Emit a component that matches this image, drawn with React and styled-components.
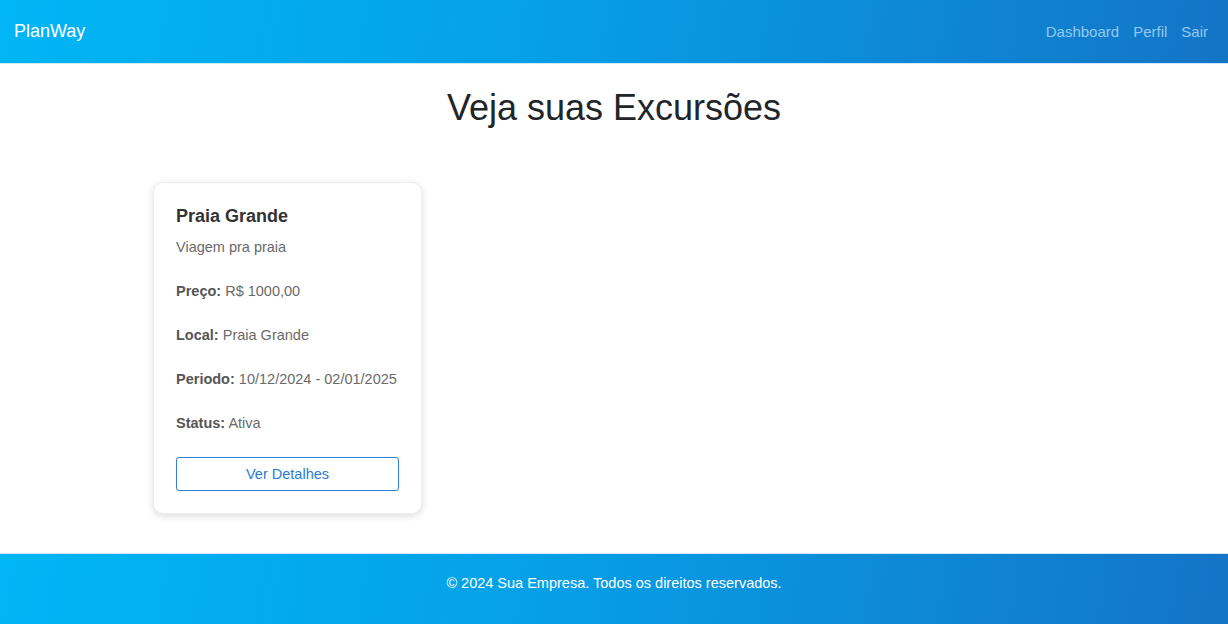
import styled, { createGlobalStyle } from "styled-components"

const GlobalStyle = createGlobalStyle`
  html, body { margin: 0; padding: 0; }
  body {
    font-family: "Liberation Sans", Arial, sans-serif;
    background: #fff;
  }
`

const excursoes = [
  {
    id: 1,
    nome: "Praia Grande",
    descricao: "Viagem pra praia",
    preco: "R$ 1000,00",
    local: "Praia Grande",
    periodo: "10/12/2024 - 02/01/2025",
    status: "Ativa",
  },
]

const Page = styled.div`
  min-height: 100vh;
  display: flex;
  flex-direction: column;
`

const TopBar = styled.header`
  height: 63px;
  display: flex;
  align-items: center;
  justify-content: space-between;
  padding: 0 20px 0 14px;
  background: linear-gradient(100deg, #01b6f6 0%, #069fe6 45%, #1474c6 100%);
  border-bottom: 1px solid #cfe9f8;
`

const Brand = styled.div`
  color: #fff;
  font-size: 18px;
`

const Nav = styled.nav`
  display: flex;
  gap: 14px;
`

const NavLink = styled.a`
  color: #93c9ef;
  font-size: 15px;
  text-decoration: none;
`

const Main = styled.main`
  flex: 1;
`

const Title = styled.h1`
  margin: 23px 0 53px;
  text-align: center;
  font-weight: 400;
  font-size: 36px;
  color: #212529;
`

const Grid = styled.div`
  max-width: 922px;
  margin: 0 auto 39px;
  display: grid;
  grid-template-columns: repeat(auto-fill, 269px);
  gap: 20px;
`

const Card = styled.div`
  border-radius: 10px;
  padding: 22px;
  background: #fff;
  box-shadow: 0 2px 7px rgba(0, 0, 0, 0.14);
  border: 1px solid #eee;
`

const CardTitle = styled.h3`
  margin: 0 0 10px;
  font-size: 18px;
  color: #333;
  line-height: 22px;
`

const Info = styled.p`
  margin: 0 0 24px;
  font-size: 14.5px;
  line-height: 20px;
  color: #6a6a6a;

  strong { color: #555; }
`

const Button = styled.button`
  width: 100%;
  height: 34px;
  border: 1px solid #2f80d8;
  border-radius: 3px;
  background: #fff;
  color: #2a7bd4;
  font-family: inherit;
  font-size: 14.5px;
`

const Footer = styled.footer`
  height: 72px;
  display: flex;
  align-items: center;
  justify-content: center;
  color: #fff;
  font-size: 14.5px;
  background: linear-gradient(100deg, #01b6f6 0%, #069fe6 45%, #1474c6 100%);
  border-top: 1px solid #cfe9f8;
  padding-bottom: 14px;
  box-sizing: border-box;
`

export default function App() {
  return (
    <Page>
      <GlobalStyle />
      <TopBar>
        <Brand>PlanWay</Brand>
        <Nav>
          <NavLink href="#">Dashboard</NavLink>
          <NavLink href="#">Perfil</NavLink>
          <NavLink href="#">Sair</NavLink>
        </Nav>
      </TopBar>
      <Main>
        <Title>Veja suas Excursões</Title>
        <Grid>
          {excursoes.map((e) => (
            <Card key={e.id}>
              <CardTitle>{e.nome}</CardTitle>
              <Info>{e.descricao}</Info>
              <Info><strong>Preço:</strong> {e.preco}</Info>
              <Info><strong>Local:</strong> {e.local}</Info>
              <Info><strong>Periodo:</strong> {e.periodo}</Info>
              <Info><strong>Status:</strong> {e.status}</Info>
              <Button>Ver Detalhes</Button>
            </Card>
          ))}
        </Grid>
      </Main>
      <Footer>© 2024 Sua Empresa. Todos os direitos reservados.</Footer>
    </Page>
  )
}
